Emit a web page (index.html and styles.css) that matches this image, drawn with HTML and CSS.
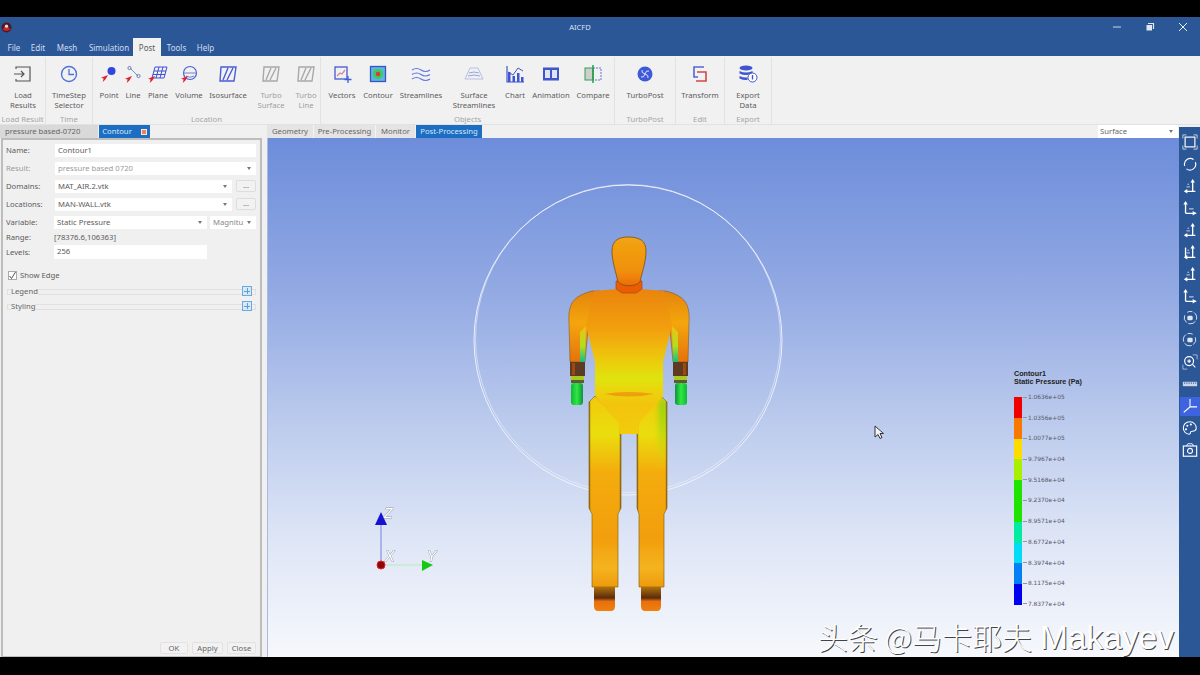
FILE: index.html
```html
<!DOCTYPE html>
<html lang="en">
<head>
<meta charset="utf-8">
<title>AICFD</title>
<link rel="stylesheet" href="styles.css">
</head>
<body>
<svg class="defs" width="0" height="0" aria-hidden="true">
  <defs>
    <symbol id="pin" viewBox="0 0 8 8"><path d="M8 0 L0 3 L3 4 L2 8 L5 5 Z" fill="#e0202c"/></symbol>
    <symbol id="iso" viewBox="0 0 20 20"><path d="M3 3H18L16 17H2Z M10 4 L5 16 M15 4 L9 16" fill="none" stroke="currentColor" stroke-width="1.4"/></symbol>
    <symbol id="ax1" viewBox="0 0 18 18"><path d="M12 15V3 M4 15H15" fill="none" stroke="#fff" stroke-width="1.5"/><path d="M12 1l2.500 4h-5z M2 15l4-2.500v5z" fill="#fff"/><path d="M5 10h4 M6 7h2" stroke="#cfd8e8" stroke-width="1"/></symbol>
    <symbol id="ax2" viewBox="0 0 18 18"><path d="M4 15V3 M4 15H16" fill="none" stroke="#fff" stroke-width="1.5"/><path d="M4 1l2.500 4h-5z M16 15l-4-2.500v5z" fill="#fff"/><path d="M8 10h5" stroke="#cfd8e8" stroke-width="1.2"/></symbol>
    <linearGradient id="torso" x1="0" y1="0" x2="0" y2="1">
      <stop offset="0" stop-color="#ea8408"/><stop offset=".28" stop-color="#f2a00c"/><stop offset=".5" stop-color="#eccc0c"/><stop offset=".62" stop-color="#dfe40c"/><stop offset=".72" stop-color="#eed00e"/><stop offset=".8" stop-color="#f2c40e"/><stop offset="1" stop-color="#f2cc0c"/>
    </linearGradient>
    <linearGradient id="head" x1="0" y1="0" x2="0" y2="1"><stop offset="0" stop-color="#f2a414"/><stop offset=".7" stop-color="#f09008"/><stop offset="1" stop-color="#ec6c06"/></linearGradient>
    <linearGradient id="arm" x1="0" y1="0" x2="0" y2="1"><stop offset="0" stop-color="#e38408"/><stop offset=".45" stop-color="#f4a60c"/><stop offset="1" stop-color="#e47208"/></linearGradient>
    <linearGradient id="inner" x1="0" y1="0" x2="0" y2="1"><stop offset="0" stop-color="#f0c010"/><stop offset=".55" stop-color="#b0e020"/><stop offset="1" stop-color="#10c080"/></linearGradient>
    <linearGradient id="hand" x1="0" y1="0" x2="1" y2="0"><stop offset="0" stop-color="#10b838"/><stop offset=".5" stop-color="#30e840"/><stop offset="1" stop-color="#109040"/></linearGradient>
    <linearGradient id="leg" x1="0" y1="0" x2="0" y2="1"><stop offset="0" stop-color="#f2c80c"/><stop offset=".2" stop-color="#eade0c"/><stop offset=".4" stop-color="#f4ac0c"/><stop offset=".75" stop-color="#f29e0c"/><stop offset=".9" stop-color="#f4b420"/><stop offset="1" stop-color="#ee9a0c"/></linearGradient>
    <linearGradient id="legside" x1="0" y1="0" x2="0" y2="1"><stop offset="0" stop-color="#80d010"/><stop offset=".4" stop-color="#a8d810"/><stop offset="1" stop-color="#d0d810" stop-opacity="0"/></linearGradient>
    <linearGradient id="edge" x1="0" y1="0" x2="1" y2="0"><stop offset="0" stop-color="#6a4a10" stop-opacity=".8"/><stop offset=".06" stop-color="#6a4a10" stop-opacity="0"/><stop offset=".94" stop-color="#6a4a10" stop-opacity="0"/><stop offset="1" stop-color="#6a4a10" stop-opacity=".8"/></linearGradient>
    <linearGradient id="foot" x1="0" y1="0" x2="0" y2="1"><stop offset="0" stop-color="#b07008"/><stop offset=".45" stop-color="#5a2c10"/><stop offset=".6" stop-color="#e87008"/><stop offset="1" stop-color="#f08008"/></linearGradient>
    <filter id="soft" x="-5%" y="-5%" width="110%" height="110%"><feGaussianBlur stdDeviation=".55"/></filter>
    <filter id="wide" x="-60%" y="-20%" width="220%" height="140%"><feGaussianBlur stdDeviation="3"/></filter>
    <clipPath id="clip-thigh"><path d="M591 402L597 396L621 424V508L591 508Z"/></clipPath>
  </defs>
</svg>

<div class="app">
  <header class="titlebar">
    <svg class="logo" viewBox="0 0 12 12"><circle cx="6" cy="6" r="5.500" fill="#4a1a1e"/><path d="M1.500 8Q6 2 10.500 8Q6 11.500 1.500 8Z" fill="#c8242c"/><circle cx="6" cy="4.500" r="1.800" fill="#eadcd8"/></svg>
    <span class="title">AICFD</span>
    <div class="winbtns">
      <svg class="winbtn" viewBox="0 0 12 12"><path d="M2 6h8" stroke="#cdd8ea" stroke-width="1"/></svg>
      <svg class="winbtn" viewBox="0 0 12 12"><path d="M4 2.500h5.500V8" fill="none" stroke="#dfe7f3" stroke-width="1.2"/><rect x="2.500" y="4" width="5.500" height="5.500" fill="#dfe7f3"/></svg>
      <svg class="winbtn" viewBox="0 0 12 12"><path d="M2 2l8 8M10 2l-8 8" stroke="#e8eef7" stroke-width="1"/></svg>
    </div>
  </header>
  <nav class="menubar">
    <span class="menu m-file">File</span><span class="menu m-edit">Edit</span><span class="menu m-mesh">Mesh</span><span class="menu m-sim">Simulation</span><span class="menu active">Post</span><span class="menu m-tools">Tools</span><span class="menu m-help">Help</span>
  </nav>

  <section class="ribbon">
    <div class="group g-load">
      <div class="items">
        <div class="item"><svg class="ico" viewBox="0 0 20 20"><path d="M3 5V3H17V17H3V15 M1 10H11 M8 7l3 3-3 3" fill="none" stroke="#555" stroke-width="1.2"/></svg><span>Load<br>Results</span></div>
      </div>
      <div class="glabel">Load Result</div>
    </div>
    <div class="group g-time">
      <div class="items">
        <div class="item"><svg class="ico" viewBox="0 0 20 20"><circle cx="10" cy="10" r="7.500" fill="none" stroke="#4f74d8" stroke-width="1.4"/><path d="M10 5v5.500h5" fill="none" stroke="#4f74d8" stroke-width="1.3"/></svg><span>TimeStep<br>Selector</span></div>
      </div>
      <div class="glabel">Time</div>
    </div>
    <div class="group g-loc">
      <div class="items">
        <div class="item"><svg class="ico" viewBox="0 0 20 20"><circle cx="12.500" cy="7" r="4" fill="#2f46e0"/><use href="#pin" x="2" y="11" width="7" height="7"/></svg><span>Point</span></div>
        <div class="item"><svg class="ico" viewBox="0 0 20 20"><path d="M7 4L15 12" stroke="#7f90b8" stroke-width="1"/><circle cx="6.500" cy="4" r="1.600" fill="none" stroke="#6f80c0"/><circle cx="15.500" cy="12" r="1.600" fill="none" stroke="#6f80c0"/><use href="#pin" x="2" y="12" width="7" height="7"/></svg><span>Line</span></div>
        <div class="item"><svg class="ico" viewBox="0 0 20 20"><path d="M7 3H19L16 14H4Z M11 3L8 14 M15 3L12 14 M6 7H18 M5 10.500H17" fill="none" stroke="#3f50d8" stroke-width="1"/><use href="#pin" x="0" y="12" width="7" height="7"/></svg><span>Plane</span></div>
        <div class="item"><svg class="ico" viewBox="0 0 20 20"><circle cx="11" cy="9" r="6.500" fill="none" stroke="#4f60d8" stroke-width="1.2"/><path d="M4.500 9h13 M7 12q4 2.500 8 0" fill="none" stroke="#7080d0" stroke-width="1"/><use href="#pin" x="2" y="12" width="7" height="7"/></svg><span>Volume</span></div>
        <div class="item"><svg class="ico iso-blue" viewBox="0 0 20 20"><use href="#iso"/></svg><span>Isosurface</span></div>
        <div class="item off"><svg class="ico iso-gray" viewBox="0 0 20 20"><use href="#iso"/></svg><span>Turbo<br>Surface</span></div>
        <div class="item off"><svg class="ico iso-gray" viewBox="0 0 20 20"><use href="#iso"/></svg><span>Turbo<br>Line</span></div>
      </div>
      <div class="glabel">Location</div>
    </div>
    <div class="group g-obj">
      <div class="items">
        <div class="item"><svg class="ico" viewBox="0 0 20 20"><rect x="3" y="3" width="12" height="12" fill="#eef0f8" stroke="#4a58d0" stroke-width="1.3"/><path d="M5 12l3-3 2 1 3-4" fill="none" stroke="#d88a80" stroke-width="1.300"/><path d="M16 12v7M12.500 15.500h7" stroke="#3f60d8" stroke-width="1.300"/></svg><span>Vectors</span></div>
        <div class="item"><svg class="ico" viewBox="0 0 20 20"><rect x="2.500" y="2.500" width="15" height="15" fill="#58b8d8" stroke="#3f50c8" stroke-width="1.300"/><circle cx="10" cy="10" r="5" fill="#40c860"/><circle cx="10" cy="10" r="2.200" fill="#e03838"/></svg><span>Contour</span></div>
        <div class="item"><svg class="ico" viewBox="0 0 20 20"><path d="M1 6q4.500-3 9 0t9 0 M1 10.500q4.500-3 9 0t9 0 M1 15q4.500-3 9 0t9 0" fill="none" stroke="#6078e0" stroke-width="1.200"/></svg><span>Streamlines</span></div>
        <div class="item"><svg class="ico" viewBox="0 0 20 20"><path d="M6 4H14L19 15H1Z" fill="#eef0f8" stroke="#b8c0e0"/><path d="M5 9q5-2 10 0 M4 12q6-2 12 0" fill="none" stroke="#98a4d0"/></svg><span>Surface<br>Streamlines</span></div>
        <div class="item"><svg class="ico" viewBox="0 0 20 20"><path d="M3 18V8h2.500v10z M7.500 18v-6H10v6z M12 18V9h2.500v9z M16 18v-5h2.500v5z" fill="#3f55d0"/><path d="M2 2v16h17" fill="none" stroke="#3f55d0" stroke-width="1.200"/><path d="M3 8l5 3 5-7 5 3" fill="none" stroke="#3f55d0"/></svg><span>Chart</span></div>
        <div class="item"><svg class="ico" viewBox="0 0 20 20"><rect x="2" y="3.500" width="16" height="13" fill="#3f55c8"/><rect x="4" y="6" width="5" height="8" fill="#dfe4f4"/><rect x="11" y="6" width="5" height="8" fill="#dfe4f4"/></svg><span>Animation</span></div>
        <div class="item"><svg class="ico" viewBox="0 0 20 20"><rect x="2" y="4" width="8" height="12" fill="#cfcfcf" stroke="#30a050"/><rect x="10" y="4" width="8" height="12" fill="none" stroke="#6070d8" stroke-dasharray="2 1"/><path d="M10 1v18" stroke="#20a040" stroke-width="1.500"/></svg><span>Compare</span></div>
      </div>
      <div class="glabel">Objects</div>
    </div>
    <div class="group g-turbo">
      <div class="items">
        <div class="item"><svg class="ico" viewBox="0 0 20 20"><circle cx="10" cy="10" r="7.500" fill="#3f5ad8"/><path d="M10 10q-4-1-3-4M10 10q4 1 3 4M10 10q1-4 4-3M10 10q-1 4-4 3" fill="none" stroke="#dfe4f8" stroke-width="1"/></svg><span>TurboPost</span></div>
      </div>
      <div class="glabel">TurboPost</div>
    </div>
    <div class="group g-edit">
      <div class="items">
        <div class="item"><svg class="ico" viewBox="0 0 20 20"><path d="M14 3H4V13H8" fill="none" stroke="#5068d0" stroke-width="1.600"/><path d="M7 8H16V17H6" fill="none" stroke="#d04848" stroke-width="1.600"/></svg><span>Transform</span></div>
      </div>
      <div class="glabel">Edit</div>
    </div>
    <div class="group g-exp">
      <div class="items">
        <div class="item"><svg class="ico" viewBox="0 0 20 20"><ellipse cx="8" cy="4" rx="6.500" ry="2.500" fill="#3f55d0"/><path d="M1.500 7q6.500 3 13 0v2.500q-6.500 3-13 0z M1.500 12q4 2 8 1.500V16q-4 .5-8-1.500z" fill="#3f55d0"/><circle cx="14.500" cy="13.500" r="4.500" fill="#fff" stroke="#3f55d0"/><path d="M14.500 11v4.500" stroke="#3f55d0" stroke-width="1.400"/></svg><span>Export<br>Data</span></div>
      </div>
      <div class="glabel">Export</div>
    </div>
  </section>

  <main class="workspace">
    <aside class="side">
      <div class="tabs tabs-left">
        <span class="tab t-result">pressure based-0720</span>
        <span class="tab tab-on t-contour">Contour <i class="tab-x"></i></span>
      </div>
      <div class="panel">
        <div class="row r18"><label>Name:</label><div class="field grow">Contour1</div></div>
        <div class="row r18"><label class="dim">Result:</label><div class="field grow dim">pressure based 0720<b class="caret"></b></div></div>
        <div class="row r18"><label>Domains:</label><div class="field grow">MAT_AIR.2.vtk<b class="caret"></b></div><span class="more">...</span></div>
        <div class="row r18"><label>Locations:</label><div class="field grow">MAN-WALL.vtk<b class="caret"></b></div><span class="more">...</span></div>
        <div class="row r18 var"><label>Variable:</label><div class="field grow">Static Pressure<b class="caret"></b></div><div class="field mag">Magnitu<b class="caret"></b></div></div>
        <div class="row r12 var"><label>Range:</label><span>[78376.6,106363]</span></div>
        <div class="row r18 var"><label>Levels:</label><div class="field lev">256</div></div>
        <div class="row check"><span class="box"><svg viewBox="0 0 9 9"><path d="M1.500 5l2 2.500L7.500 1" fill="none" stroke="#555" stroke-width="1"/></svg></span>Show Edge</div>
        <div class="section"><span>Legend</span><b class="plus"></b></div>
        <div class="section"><span>Styling</span><b class="plus"></b></div>
        <div class="actions"><span class="btn b-ok">OK</span><span class="btn b-apply">Apply</span><span class="btn b-close">Close</span></div>
      </div>
    </aside>

    <section class="center">
      <div class="tabs tabs-view">
        <span class="tab t-g">Geometry</span><span class="tab t-p">Pre-Processing</span><span class="tab t-m">Monitor</span><span class="tab tab-on t-pp">Post-Processing</span>
        <div class="surface">Surface<b class="caret"></b></div>
      </div>
      <div class="viewport">
        <svg class="scene" viewBox="267 138 912 519">
          <ellipse cx="628" cy="340" rx="154" ry="155" class="ring"/>
          <ellipse cx="628" cy="338.500" rx="152.500" ry="154" class="ring ring2"/>
          <g filter="url(#soft)">
            <g id="limb">
              <path d="M569 322C568 304 573 296 592 291L600 291L588 330L585 362H570Z" fill="url(#arm)" stroke="#7a4a10" stroke-width=".5"/>
              <path d="M580 332L586 326L585 362H580Z" fill="url(#inner)"/>
              <rect x="570" y="362" width="15" height="14" fill="#5c3a22"/>
              <rect x="572" y="363" width="3" height="12" fill="#a04810"/>
              <rect x="571" y="376" width="13" height="4" fill="#a8c820"/>
              <rect x="571" y="380" width="13" height="3" fill="#605a30"/>
              <rect x="571" y="383" width="12" height="22" rx="3" fill="url(#hand)"/>
            </g>
            <use href="#limb" transform="translate(1258) scale(-1 1)"/>
            <path d="M589 402L595 396L621 424V508L618 514V587H592V514L589 508Z" fill="url(#leg)" stroke="#7a5a10" stroke-width=".6"/>
            <path d="M589 402L595 396L621 424V508L618 514V587H592V514L589 508Z" fill="url(#edge)"/>
            <path d="M594 587H615V606Q615 611 611 611H598Q594 611 594 606Z" fill="url(#foot)"/>
            <g transform="translate(1258) scale(-1 1)">
              <path d="M591 402L597 396L621 424V508L619 514V587H594V514L591 508Z" fill="url(#leg)" stroke="#7a5a10" stroke-width=".6"/>
              <g clip-path="url(#clip-thigh)"><path d="M591 402L597 396L599 405V470H591Z" fill="url(#legside)" filter="url(#wide)"/></g>
              <path d="M591 402L597 396L621 424V508L619 514V587H594V514L591 508Z" fill="url(#edge)"/>
              <path d="M597 587H617V606Q617 611 613 611H601Q597 611 597 606Z" fill="url(#foot)"/>
            </g>
            <path d="M594 291Q629 287 664 291L672 325L663 362L663 395L660 400L640 422L638 434H620L618 422L598 400L595 395L595 362L586 325Z" fill="url(#torso)"/>
            <path d="M604 394Q629 390 654 394Q629 399 604 394Z" fill="#f08a10" opacity=".7"/>
            <path d="M616 281H642V289L636 293H622L616 289Z" fill="#ec5c06" stroke="#a04010" stroke-width=".6"/>
            <path d="M628 237C640 237 646 241 646 251C646 262 642 272 640 282C635 287 623 287 618 282C616 272 612 262 612 251C612 241 618 237 628 237Z" fill="url(#head)" stroke="#7a5010" stroke-width=".8"/>
          </g>
          <g class="triad">
            <path d="M381 565V522" stroke="#aab4ec" stroke-width="2"/>
            <path d="M381 512L387 525H375Z" fill="#1414d0"/>
            <path d="M381 565H424" stroke="#b8ecb8" stroke-width="1.200"/>
            <path d="M433 565L422 560V571Z" fill="#14c814"/>
            <circle cx="381" cy="565" r="4" fill="#8a0808" stroke="#e82020" stroke-width="1"/>
            <text x="384" y="518" class="axis">Z</text>
            <text x="385" y="561" class="axis">X</text>
            <text x="427" y="561" class="axis">Y</text>
          </g>
          <path d="M875 426V437L878 434.500L880 438.500L882 437.500L880 433.500H883.500Z" fill="#f4f4f4" stroke="#222" stroke-width=".9"/>
        </svg>

        <div class="legend">
          <div class="lg-title">Contour1<br>Static Pressure (Pa)</div>
          <div class="lg-body">
            <div class="lg-bar"><i class="c1"></i><i class="c2"></i><i class="c3"></i><i class="c4"></i><i class="c5"></i><i class="c5"></i><i class="c6"></i><i class="c7"></i><i class="c8"></i><i class="c9"></i></div>
            <div class="lg-vals">
              <span>1.0636e+05</span><span>1.0356e+05</span><span>1.0077e+05</span><span>9.7967e+04</span><span>9.5168e+04</span><span>9.2370e+04</span><span>8.9571e+04</span><span>8.6772e+04</span><span>8.3974e+04</span><span>8.1175e+04</span><span>7.8377e+04</span>
            </div>
          </div>
        </div>
        <div class="watermark">头条 @马卡耶夫<span class="wm-latin">Makayev</span></div>
      </div>
    </section>

    <aside class="toolbar">
      <svg class="tool" viewBox="0 0 18 18"><rect x="3.500" y="3.500" width="11" height="11" fill="none" stroke="#fff" stroke-width="1.300"/><path d="M1 5V1H5M13 1H17V5M1 13V17H5M13 17H17V13" fill="none" stroke="#cfd8e8" stroke-width="1"/></svg>
      <svg class="tool" viewBox="0 0 18 18"><path d="M3 11A6.500 6.500 0 0 1 13 4M15 7A6.500 6.500 0 0 1 5 14.500" fill="none" stroke="#fff" stroke-width="1.300"/></svg>
      <svg class="tool" viewBox="0 0 18 18"><use href="#ax1"/></svg>
      <svg class="tool" viewBox="0 0 18 18"><use href="#ax2"/></svg>
      <svg class="tool" viewBox="0 0 18 18"><use href="#ax1"/></svg>
      <svg class="tool" viewBox="0 0 18 18"><use href="#ax1"/><path d="M4 15V4" stroke="#fff" stroke-width="1.500"/></svg>
      <svg class="tool" viewBox="0 0 18 18"><use href="#ax1"/></svg>
      <svg class="tool" viewBox="0 0 18 18"><use href="#ax2"/></svg>
      <svg class="tool" viewBox="0 0 18 18"><path d="M3 6A7 7 0 1 0 6 2.500" fill="none" stroke="#fff" stroke-width=".9" stroke-dasharray="9 2"/><rect x="6" y="6.500" width="6" height="5" rx="1.500" fill="#dfe6f2"/></svg>
      <svg class="tool" viewBox="0 0 18 18"><path d="M15 6A7 7 0 1 1 12 2.500" fill="none" stroke="#fff" stroke-width=".9" stroke-dasharray="9 2"/><rect x="6" y="6.500" width="6" height="5" rx="1.500" fill="#dfe6f2"/></svg>
      <svg class="tool" viewBox="0 0 18 18"><circle cx="8" cy="8" r="5" fill="none" stroke="#fff" stroke-width="1.300"/><path d="M6 8h4M8 6v4M11.500 11.500L15 15" stroke="#fff" stroke-width="1.200"/><path d="M12 1h5v5M1 12v5h5" fill="none" stroke="#cfd8e8" stroke-width=".8"/></svg>
      <svg class="tool" viewBox="0 0 18 18"><rect x="1" y="6.500" width="16" height="5" fill="#cdd6e6"/><path d="M3 7v2M5.500 7v2M8 7v2M10.500 7v2M13 7v2M15.500 7v2" stroke="#2b5797" stroke-width=".8"/></svg>
      <span class="tool-on"><svg class="tool" viewBox="0 0 18 18"><path d="M9 1V10L2 16M9 10H17" fill="none" stroke="#fff" stroke-width="1.200"/></svg></span>
      <svg class="tool" viewBox="0 0 18 18"><path d="M9 2C4 2 1.500 5.500 1.500 9S4 16 8 16c2 0 1-2 2-3s5 1 6-3S13 2 9 2Z" fill="none" stroke="#fff" stroke-width="1.200"/><circle cx="6" cy="6.500" r="1.200" fill="#fff"/><circle cx="10" cy="5" r="1.200" fill="#fff"/><circle cx="4.500" cy="10.500" r="1.200" fill="#fff"/></svg>
      <svg class="tool" viewBox="0 0 18 18"><rect x="1.500" y="4.500" width="15" height="11.500" fill="none" stroke="#fff" stroke-width="1.300"/><path d="M5 4.500L6.500 2h5L13 4.500" fill="none" stroke="#fff"/><circle cx="9" cy="10" r="2.800" fill="none" stroke="#fff" stroke-width="1.200"/></svg>
    </aside>
  </main>
</div>
</body>
</html>
```

FILE: styles.css
```css
* { box-sizing: border-box; }
html, body { margin: 0; height: 100%; background: #000; overflow: hidden; }
body { font-family: "Noto Sans", "Liberation Sans", sans-serif; font-size: 7.7px; color: #5c5c5c; }
.defs { position: absolute; }

.app { margin-top: 17px; height: 640px; width: 1200px; display: flex; flex-direction: column; background: #f0f0f0; }

.titlebar { height: 21px; flex: none; background: #2b5797; display: flex; align-items: center; position: relative; }
.logo { width: 11px; height: 11px; margin-left: 1px; margin-top: -1px; }
.title { position: absolute; left: 560px; width: 40px; text-align: center; color: #d8e2f2; font-size: 7.6px; top: 5px; }
.winbtns { margin-left: auto; display: flex; gap: 21px; padding-right: 11px; margin-top: -2px; }
.winbtn { width: 12px; height: 12px; }

.menubar { height: 18px; flex: none; background: #2b5797; display: flex; align-items: stretch; }
.menu { color: #cfdcf0; font-size: 8px; line-height: 18px; padding-top: 1px; text-align: center; }
.m-file { width: 28px; }
.m-edit { width: 20px; }
.m-mesh { width: 38px; }
.m-sim { width: 46px; }
.menu.active { width: 28px; background: #f1f1f1; color: #5c5c5c; margin-left: 1px; }
.m-tools { width: 31px; }
.m-help { width: 27px; }

.ribbon { height: 69px; flex: none; display: flex; background: #f1f1f1; padding-top: 1px; border-bottom: 1px solid #e2e2e2; }
.group { display: flex; flex-direction: column; border-right: 1px solid #e2e2e2; }
.items { flex: 1; display: grid; }
.item { display: flex; flex-direction: column; align-items: center; padding-top: 7px; text-align: center; line-height: 10px; white-space: nowrap; }
.item span { margin-top: 6px; }
.ico { width: 20px; height: 20px; flex: none; }
.iso-blue { color: #4a5cd8; }
.iso-gray { color: #a8a8a8; }
.off { color: #a0a0a0; }
.glabel { height: 10px; line-height: 10px; text-align: center; color: #a4a4a4; white-space: nowrap; overflow: hidden; }

.g-load { width: 46px; }
.g-load .items { grid-template-columns: 46px; }
.g-time { width: 47px; }
.g-time .items { grid-template-columns: 46px; }
.g-loc { width: 228px; }
.g-loc .items { padding-left: 4px; grid-template-columns: 24px 24px 26px 36px 42px 44px 26px; }
.g-obj { width: 294px; }
.g-obj .items { padding-left: 3px; grid-template-columns: 36px 36px 50px 56px 26px 46px 38px; }
.g-turbo { width: 61px; }
.g-turbo .items { grid-template-columns: 60px; }
.g-edit { width: 49px; }
.g-edit .items { grid-template-columns: 48px; }
.g-exp { width: 47px; }
.g-exp .items { grid-template-columns: 46px; }

.workspace { flex: 1; display: flex; min-height: 0; }
.side { width: 267px; flex: none; display: flex; flex-direction: column; }
.center { flex: 1; min-width: 0; display: flex; flex-direction: column; }

.tabs { height: 13px; flex: none; display: flex; line-height: 13px; }
.tab { text-align: center; background: #e4e4e4; color: #666; white-space: nowrap; }
.tab-on { background: #1b6ec2; color: #dbe8f6; }
.t-result { width: 98px; background: #d9d9d9; text-align: left; padding-left: 5px; margin-right: 1px; }
.t-contour { width: 51px; display: flex; align-items: center; justify-content: center; gap: 9px; }
.tab-x { width: 6px; height: 6px; background: #f08058; border: 1px solid #fbe4da; display: block; }
.t-g { width: 46px; }
.t-p { width: 62px; border-left: 1px solid #f4f4f4; }
.t-m { width: 40px; border-left: 1px solid #f4f4f4; }
.t-pp { width: 66px; margin-left: 1px; }
.surface { margin-left: auto; margin-right: 1px; width: 80px; background: #fff; padding-left: 2px; color: #666; position: relative; }

.panel { flex: 1; margin: 0 5px 0 1px; border: 2px solid #bdbdbd; border-bottom-width: 1px; background: #f0f0f0; padding: 1px 4px 2px 3px; display: flex; flex-direction: column; min-height: 0; }
.row { display: flex; align-items: center; flex: none; }
.r18 { height: 18px; }
.r12 { height: 12px; }
.row label { width: 49px; flex: none; }
.var label { width: 48px; }
.dim { color: #9a9a9a; }
.field { height: 13px; line-height: 13px; background: #fff; padding-left: 3px; position: relative; white-space: nowrap; overflow: hidden; }
.grow { flex: 1; }
.mag { width: 46px; margin-left: 3px; flex: none; color: #888; }
.lev { width: 153px; height: 14px; }
.caret { position: absolute; right: 5px; top: 5px; width: 0; height: 0; border: 2.5px solid transparent; border-top: 3px solid #777; border-bottom: 0; }
.more { width: 20px; height: 12px; margin-left: 4px; line-height: 9px; text-align: center; border: 1px solid #ddd; border-radius: 2px; color: #777; background: #f2f2f2; }
.check { height: 14px; margin-top: 7px; margin-bottom: 1px; gap: 3px; padding-left: 2px; }
.box { width: 9px; height: 9px; border: 1px solid #aaa; background: #fff; display: block; }
.box svg { display: block; width: 9px; height: 9px; margin: -1px; }
.section { height: 14px; margin-top: 1px; display: flex; align-items: center; justify-content: space-between; position: relative; padding: 0 4px 0 5px; }
.section::before { content: ""; position: absolute; left: 1px; right: 0; top: 5px; height: 4px; border: 1px solid #e0e0e0; }
.section span { position: relative; background: #f0f0f0; color: #666; }
.plus { position: relative; width: 10px; height: 10px; background: linear-gradient(#5aa0d8, #5aa0d8) center / 6px 1px no-repeat, linear-gradient(#5aa0d8, #5aa0d8) center / 1px 6px no-repeat, #d8e8f4; border: 1px solid #6aaadc; }
.actions { margin-top: auto; display: flex; justify-content: flex-end; gap: 4px; }
.btn { height: 12px; line-height: 11px; text-align: center; border: 1px solid #e2e2e2; border-radius: 2px; background: #f2f2f2; color: #666; }
.b-ok { width: 28px; }
.b-apply { width: 31px; }
.b-close { width: 29px; }

.viewport { flex: 1; position: relative; min-height: 0; border-left: 1px solid #a8bbe4; background: linear-gradient(#6d8ddb 0%, #93aae3 30%, #bccbed 55%, #dfe6f6 78%, #f6f8fc 100%); }
.scene { position: absolute; left: -1px; top: 0; width: 912px; height: 519px; }
.ring { fill: none; stroke: #f2f5fc; stroke-width: .9; }
.ring2 { stroke-width: .7; opacity: .8; }
.axis { font-family: "Liberation Sans", sans-serif; font-size: 14px; font-style: italic; fill: #fff; stroke: #556; stroke-width: .9; stroke-opacity: .5; paint-order: stroke; }

.legend { position: absolute; left: 746px; top: 232px; color: #222; }
.lg-title { font-family: "Liberation Sans", sans-serif; font-weight: bold; font-size: 7.2px; line-height: 8px; }
.lg-body { display: flex; margin-top: 11px; }
.lg-bar { width: 8px; height: 208px; flex: none; display: flex; flex-direction: column; }
.lg-bar i { flex: 1; display: block; }
.c1 { background: #f00000; }
.c2 { background: #f87800; }
.c3 { background: #ffdc00; }
.c4 { background: #a8f000; }
.c5 { background: #20e400; }
.c6 { background: #00eca0; }
.c7 { background: #00dcf8; }
.c8 { background: #0080f4; }
.c9 { background: #0000f0; }
.lg-vals { height: 215px; margin-top: -4px; margin-left: 1px; display: flex; flex-direction: column; justify-content: space-between; font-family: "DejaVu Sans", sans-serif; font-size: 5.9px; line-height: 8px; color: #556; white-space: nowrap; }
.lg-vals span { height: 8px; display: flex; align-items: center; gap: 1px; }
.lg-vals span::before { content: ""; width: 4px; height: 1px; background: #8a94ac; }

.watermark { position: absolute; left: 550px; top: 478px; height: 40px; line-height: 40px; font-family: "Noto Sans CJK SC", "Noto Sans", sans-serif; font-weight: 300; font-size: 30px; color: #fff; white-space: nowrap; text-shadow: 1px 1px 0 #444; }
.wm-latin { font-family: "Liberation Sans", sans-serif; font-size: 33.5px; font-weight: 400; margin-left: 8px; }

.toolbar { width: 21px; flex: none; margin-top: 2px; background: #2b5797; display: flex; flex-direction: column; align-items: center; padding-top: 7px; gap: 6px; }
.tool { width: 16px; height: 16px; display: block; flex: none; }
.tool-on { width: 20px; height: 19px; background: #3d63de; display: flex; align-items: center; justify-content: center; margin: -1.5px 0; flex: none; }
```
